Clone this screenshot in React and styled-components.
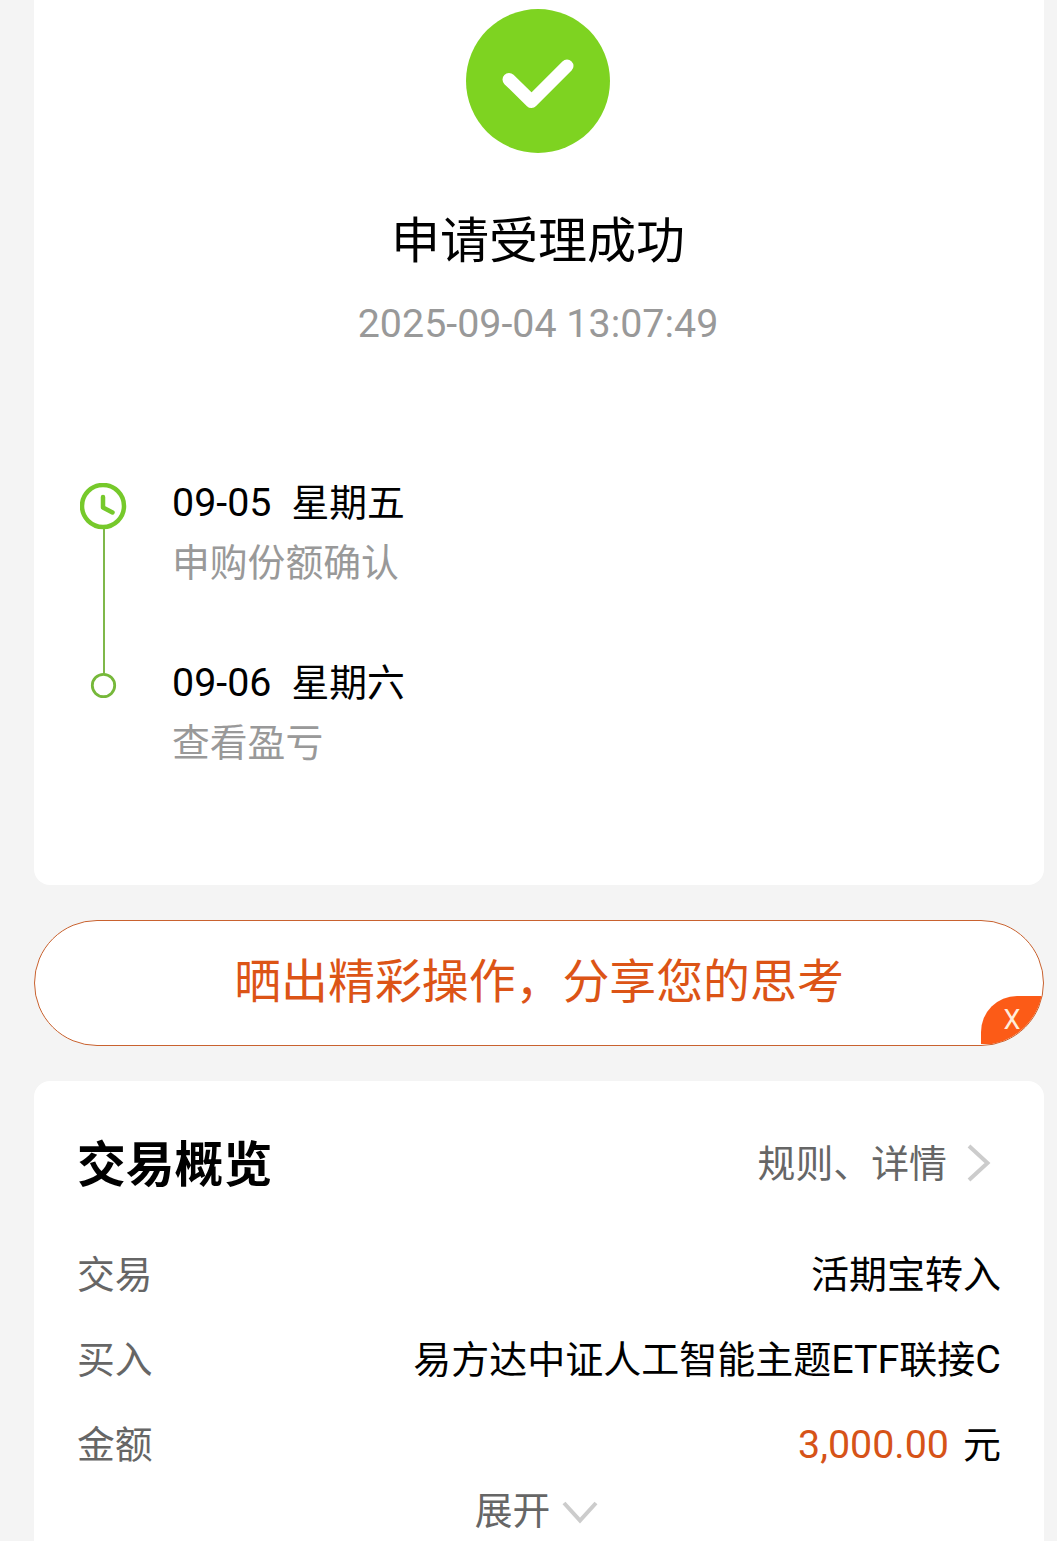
import styled, { createGlobalStyle } from "styled-components";

const steps = [
  { date: "09-05", day: "星期五", text: "申购份额确认" },
  { date: "09-06", day: "星期六", text: "查看盈亏" },
];

const App = () => {
  return (
    <Page>
      <GlobalStyle />
      <ResultCard>
        <SuccessIcon viewBox="0 0 144 144">
          <circle cx="72" cy="72" r="72" fill="#7ed321" />
          <path d="M43 70.500 L65.500 92.500 L101 57" />
        </SuccessIcon>
        <Title>申请受理成功</Title>
        <Time>2025-09-04 13:07:49</Time>
        <Timeline>
          <Track viewBox="0 0 48 216">
            <path d="M24 46 V190" stroke="#7fb84a" strokeWidth="2" />
            <circle cx="23" cy="23" r="21" stroke="#76c92b" strokeWidth="4.500" />
            <path d="M23 14 V24.500 L32.500 29.500" stroke="#76c92b" strokeWidth="4.500" />
            <circle cx="23.500" cy="202.500" r="11.200" stroke="#76b83a" strokeWidth="2.800" />
          </Track>
          <Steps>
            {steps.map(({ date, day, text }) => (
              <Step key={date}>
                <StepDate>
                  <Latin>{date}</Latin>
                  <span>{day}</span>
                </StepDate>
                <StepText>{text}</StepText>
              </Step>
            ))}
          </Steps>
        </Timeline>
      </ResultCard>

      <ShareBanner>
        <ShareText>晒出精彩操作，分享您的思考</ShareText>
        <CloseButton>X</CloseButton>
      </ShareBanner>

      <OverviewCard>
        <OverviewHeader>
          <h2>交易概览</h2>
          <DetailLink>
            <span>规则、详情</span>
            <svg width="24" height="40" viewBox="0 0 24 40">
              <path d="M2 3 L20.500 20 L2 37" />
            </svg>
          </DetailLink>
        </OverviewHeader>
        <Row>
          <Label>交易</Label>
          <Value>活期宝转入</Value>
        </Row>
        <Row>
          <Label>买入</Label>
          <Value>
            易方达中证人工智能主题<Latin>ETF</Latin>联接<Latin>C</Latin>
          </Value>
        </Row>
        <Row>
          <Label>金额</Label>
          <Value>
            <Amount>3,000.00</Amount>元
          </Value>
        </Row>
        <Expand>
          <span>展开</span>
          <svg width="36" height="24" viewBox="0 0 36 24">
            <path d="M2 2 L18 19.500 L34 2" />
          </svg>
        </Expand>
      </OverviewCard>
    </Page>
  );
};

export default App;

const GlobalStyle = createGlobalStyle`
  * {
    box-sizing: border-box;
    margin: 0;
  }

  body {
    background: #f4f4f4;
    font-family: Roboto, "Noto Sans CJK SC", sans-serif;
    color: #000;
  }
`;

const Page = styled.main`
  width: 1057px;
  height: 1541px;
  padding: 0 13px 0 34px;
  overflow: hidden;
`;

const Latin = styled.span`
  font-size: 39.400px;
`;

const ResultCard = styled.section`
  display: flex;
  flex-direction: column;
  align-items: center;
  height: 885px;
  padding: 9px 2px 0 0;
  border-radius: 0 0 16px 16px;
  background: #fff;
`;

const SuccessIcon = styled.svg`
  width: 144px;
  height: 144px;

  path {
    fill: none;
    stroke: #fff;
    stroke-width: 13;
    stroke-linecap: round;
    stroke-linejoin: round;
  }
`;

const Title = styled.h1`
  margin-top: 54px;
  font-size: 49px;
  font-weight: 400;
  line-height: 70px;
`;

const Time = styled.p`
  margin-top: 22px;
  color: #999;
  font-size: 39.400px;
  line-height: 50px;
`;

const Timeline = styled.div`
  display: flex;
  width: 100%;
  margin-top: 134px;
  padding-left: 46px;
`;

const Track = styled.svg`
  width: 48px;
  height: 216px;
  fill: none;
  stroke-linecap: round;
  stroke-linejoin: round;
`;

const Steps = styled.div`
  padding-left: 44px;
`;

const Step = styled.div`
  height: 180px;
`;

const StepDate = styled.div`
  display: flex;
  gap: 20px;
  font-size: 37.800px;
  line-height: 40px;
`;

const StepText = styled.p`
  margin-top: 20px;
  color: #999;
  font-size: 37.800px;
  line-height: 40px;
`;

const ShareBanner = styled.section`
  position: relative;
  display: flex;
  justify-content: center;
  height: 126px;
  margin-top: 35px;
  overflow: hidden;
  border: 1px solid #c9622f;
  border-radius: 63px;
  background: #fff;
`;

const ShareText = styled.p`
  color: #dc5416;
  font-size: 46.900px;
  line-height: 122px;
`;

const CloseButton = styled.button`
  position: absolute;
  right: 0;
  bottom: 1px;
  width: 62px;
  height: 48px;
  padding: 0 0 1px;
  border: 0;
  border-radius: 36px 0 0 0;
  background: #fc5b17;
  color: #ffeddc;
  font-family: inherit;
  font-size: 27px;
`;

const OverviewCard = styled.section`
  height: 480px;
  margin-top: 35px;
  padding: 37px 43px 0 43px;
  border-radius: 16px 16px 0 0;
  background: #fff;
`;

const OverviewHeader = styled.header`
  display: flex;
  justify-content: space-between;
  align-items: center;
  height: 84px;
  margin-bottom: 27px;

  h2 {
    font-size: 48.800px;
    font-weight: 700;
  }
`;

const DetailLink = styled.div`
  display: flex;
  align-items: center;
  gap: 20px;
  padding-right: 10px;
  color: #666;
  font-size: 37.900px;

  svg {
    margin-top: 5px;
  }

  path {
    fill: none;
    stroke: #ccc;
    stroke-width: 4;
  }
`;

const Row = styled.div`
  display: flex;
  justify-content: space-between;
  align-items: center;
  height: 85px;
  font-size: 38px;
`;

const Label = styled.span`
  color: #666;
  font-size: 37.800px;
`;

const Value = styled.span`
  white-space: nowrap;
`;

const Amount = styled(Latin)`
  margin-right: 14px;
  color: #d65318;
`;

const Expand = styled.div`
  display: flex;
  justify-content: center;
  align-items: center;
  gap: 12px;
  height: 46px;
  padding-right: 5px;
  color: #666;
  font-size: 37.800px;

  svg {
    margin-top: 11px;
  }

  path {
    fill: none;
    stroke: #ccc;
    stroke-width: 4;
  }
`;
